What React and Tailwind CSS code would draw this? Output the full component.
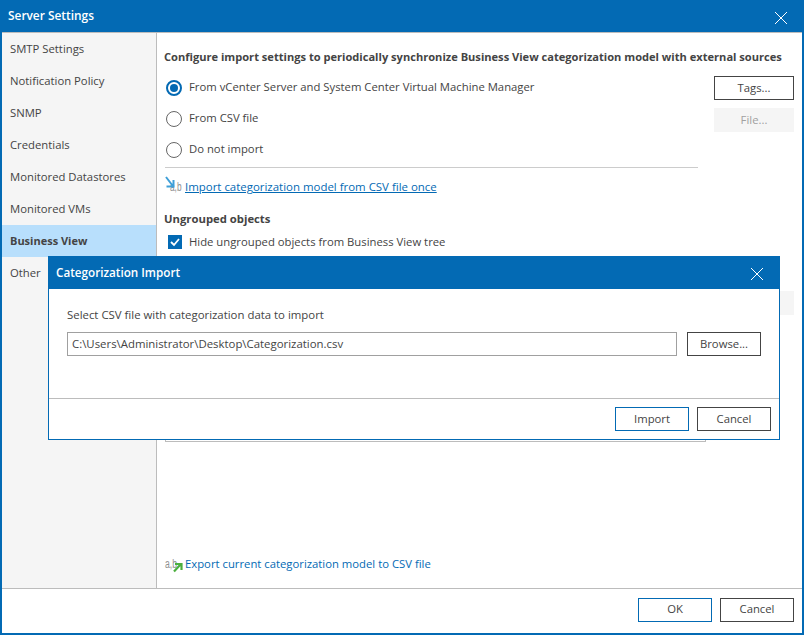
import React from "react";

const navs = [
  "SMTP Settings",
  "Notification Policy",
  "SNMP",
  "Credentials",
  "Monitored Datastores",
  "Monitored VMs",
  "Business View",
  "Other",
];

function CloseIcon({ className }) {
  return (
    <svg className={className} width="14" height="14" viewBox="0 0 14 14" fill="none" stroke="#ffffff" strokeWidth="1">
      <path d="M1 1L13 13M13 1L1 13" />
    </svg>
  );
}

function Radio({ checked, label }) {
  return (
    <div className="flex items-center h-[31px]">
      <span className={"w-[16px] h-[16px] rounded-full flex items-center justify-center ml-[2px] " + (checked ? "border-2 border-[#0369b3]" : "border-[1.5px] border-[#666666]")}>
        {checked && <span className="w-[8px] h-[8px] rounded-full bg-[#0369b3]"></span>}
      </span>
      <span className="ml-[7px]">{label}</span>
    </div>
  );
}

function Btn({ children, className }) {
  return (
    <div className={"h-[24px] flex items-center justify-center border " + className}>{children}</div>
  );
}

function ImportIcon() {
  return (
    <svg className="shrink-0 overflow-visible" width="18" height="18" viewBox="0 0 18 18" fill="none">
      <text x="5" y="13" fontSize="12" fill="#8f8f8f" fontFamily="Liberation Sans" textLength="11.5" lengthAdjust="spacingAndGlyphs">a,b</text>
      <path d="M1 -1L7.5 7.5M1.5 8.5H8.5V2" stroke="#3f9fd8" strokeWidth="2" />
    </svg>
  );
}

function ExportIcon() {
  return (
    <svg className="shrink-0 overflow-visible" width="18" height="18" viewBox="0 0 18 18" fill="none">
      <text x="0" y="13" fontSize="12" fill="#8f8f8f" fontFamily="Liberation Sans" textLength="12" lengthAdjust="spacingAndGlyphs">a,b</text>
      <path d="M9 16.5L15.5 9.5M10 9H16.5V15" stroke="#4caf3f" strokeWidth="2.2" />
    </svg>
  );
}

export default function App() {
  return (
    <div className="relative w-[804px] h-[635px] flex flex-col bg-white text-[#444444] text-[11.3px] font-['Open_Sans','Liberation_Sans',sans-serif] overflow-hidden">
      <div className="h-[32px] bg-[#036ab4] text-white text-[11.9px] font-semibold flex items-center justify-between pl-[8px] pr-[16px]">
        <span>Server Settings</span>
        <CloseIcon className="mt-[4px]" />
      </div>

      <div className="flex-1 flex flex-col border-x-2 border-b-2 border-[#036ab4]">
        <div className="flex-1 flex border-t border-b border-[#bcbcbc]">
          <div className="w-[155px] shrink-0 bg-[#f5f5f5] border-r border-[#bcbcbc]">
            {navs.map((n) => (
              <div
                key={n}
                className={
                  n === "Business View"
                    ? "h-[32px] flex items-center pl-[8px] bg-[#b8dffc] font-bold text-[11px]"
                    : "h-[32px] flex items-center pl-[8px]"
                }
              >
                {n}
              </div>
            ))}
          </div>

          <div className="flex-1 flex flex-col pl-[7px] pr-[8px] pt-[15px]">
            <div className="font-bold text-[11.1px] h-[18px] flex items-center whitespace-nowrap">
              Configure import settings to periodically synchronize Business View categorization model with external sources
            </div>
            <div className="flex mt-[6px]">
              <div className="w-[534px]">
                <Radio checked label="From vCenter Server and System Center Virtual Machine Manager" />
                <Radio label="From CSV file" />
                <Radio label="Do not import" />
                <div className="border-t border-[#cccccc] mt-[2px] ml-[1px]"></div>
              </div>
              <div className="ml-[16px] w-[80px] mt-[4px] flex flex-col gap-[8px]">
                <Btn className="border-[#444444]">Tags...</Btn>
                <Btn className="border-[#f5f5f5] bg-[#f5f5f5] text-[#a0a0a0]">File...</Btn>
              </div>
            </div>
            <div className="flex items-center h-[18px] mt-[10px] ml-[1px]">
              <ImportIcon />
              <span className="ml-[2px] text-[11.45px] text-[#036ab4] underline">Import categorization model from CSV file once</span>
            </div>
            <div className="font-bold mt-[14px] h-[18px] flex items-center">Ungrouped objects</div>
            <div className="flex items-center h-[18px] mt-[5px]">
              <span className="w-[14px] h-[14px] ml-[4px] bg-[#036ab4] flex items-center justify-center">
                <svg width="10" height="10" viewBox="0 0 10 10" fill="none" stroke="#ffffff" strokeWidth="1.8">
                  <path d="M1 5L4 8L9 2" />
                </svg>
              </span>
              <span className="ml-[7px]">Hide ungrouped objects from Business View tree</span>
            </div>
            <div className="flex justify-end mt-[40px]">
              <div className="w-[80px] h-[24px] bg-[#f5f5f5]"></div>
            </div>
            <div className="w-[541px] h-[151px] ml-[1px] border border-[#bcbcbc] -mt-[24px]"></div>
            <div className="flex items-center h-[18px] mt-[113px] ml-[1px]">
              <ExportIcon />
              <span className="ml-[2px] text-[#036ab4]">Export current categorization model to CSV file</span>
            </div>
          </div>
        </div>

        <div className="h-[44px] flex items-center justify-end gap-[8px] pr-[8px] pb-[3px]">
          <Btn className="w-[74px] border-[#036ab4]">OK</Btn>
          <Btn className="w-[74px] border-[#444444]">Cancel</Btn>
        </div>
      </div>

      <div className="absolute left-[48px] top-[256px] w-[732px] h-[184px] flex flex-col bg-white border-x border-b border-[#036ab4]">
        <div className="h-[33px] -mx-px bg-[#036ab4] text-white text-[11.7px] font-semibold flex items-center justify-between pl-[8px] pr-[16px]">
          <span>Categorization Import</span>
          <CloseIcon className="mt-[3px]" />
        </div>
        <div className="h-[110px] pl-[18px] pr-[18px] pt-[17px] border-b border-[#bcbcbc]">
          <div className="h-[18px] flex items-center text-[11.4px]">Select CSV file with categorization data to import</div>
          <div className="flex gap-[10px] mt-[8px]">
            <div className="flex-1 h-[24px] border border-[#a0a0a0] flex items-center pl-[4px] text-[11.4px]">
              C:\Users\Administrator\Desktop\Categorization.csv
            </div>
            <Btn className="w-[74px] border-[#444444]">Browse...</Btn>
          </div>
        </div>
        <div className="h-[40px] flex items-center justify-end gap-[8px] pr-[8px]">
          <Btn className="w-[74px] border-[#036ab4]">Import</Btn>
          <Btn className="w-[74px] border-[#444444]">Cancel</Btn>
        </div>
      </div>
    </div>
  );
}
